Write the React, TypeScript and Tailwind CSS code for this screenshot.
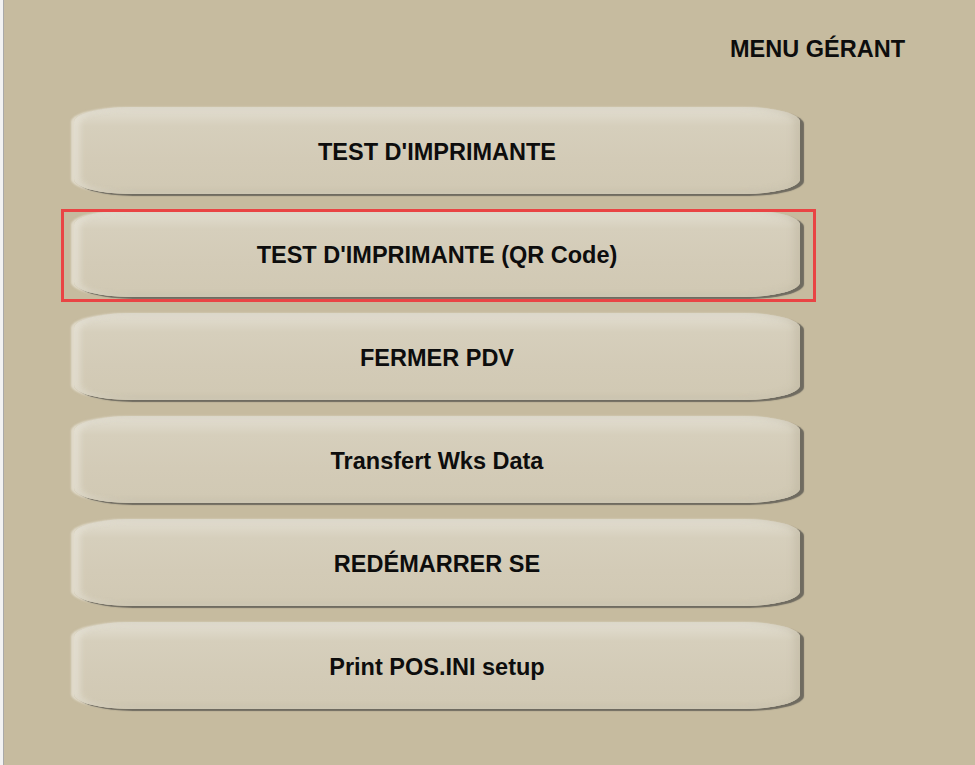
import React from 'react';

const items = [
  'TEST D\'IMPRIMANTE',
  'TEST D\'IMPRIMANTE (QR Code)',
  'FERMER PDV',
  'Transfert Wks Data',
  'REDÉMARRER SE',
  'Print POS.INI setup',
];

const MenuButton: React.FC<{ label: string }> = ({ label }) => (
  <button
    className="w-[726px] h-[87px] pt-[4px] rounded-[55px/15px] flex items-center justify-center text-[23.5px] font-bold text-[#0d0d0d] bg-[linear-gradient(to_bottom,#e3dfd2_0%,#d6cfbc_22%,#d3cbb7_60%,#d1c9b4_92%,#c9c1ab_100%)] shadow-[4px_2px_1px_#6f6b60,-3px_0_2px_rgba(235,231,220,0.7),inset_-6px_0_6px_rgba(190,182,160,0.5),inset_6px_0_6px_rgba(235,232,222,0.6)]"
  >
    {label}
  </button>
);

export default function App() {
  return (
    <div
      className="w-[975px] h-[765px] flex bg-[#c6bb9f] overflow-hidden"
      style={{ fontFamily: '"Liberation Sans", Arial, sans-serif' }}
    >
      <div className="w-[4px] h-full bg-[#f2f2f2] border-r border-[#a9a9a9]" />
      <div className="flex-1 flex flex-col">
        <div className="pt-[35px] pr-[70px] text-right text-[23.5px] leading-[28px] font-bold text-[#0d0d0d]">
          MENU GÉRANT
        </div>
        <div className="mt-[44px] pl-[70px] flex flex-col gap-[16px]">
          {items.map((label, i) => (
            <div key={label} className="relative w-fit">
              <MenuButton label={label} />
              {i === 1 && (
                <div className="absolute -left-[13px] -top-[1px] -right-[16px] -bottom-[5px] border-[3px] border-[#e94444] pointer-events-none" />
              )}
            </div>
          ))}
        </div>
      </div>
    </div>
  );
}
